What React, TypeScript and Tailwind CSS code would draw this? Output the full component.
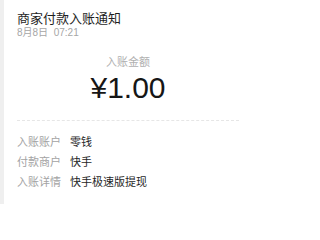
export default function App() {
  const rows = [
    ["入账账户", "零钱"],
    ["付款商户", "快手"],
    ["入账详情", "快手极速版提现"],
  ];
  return (
    <div
      className="flex w-[248px] h-[204px] bg-white overflow-hidden"
      style={{ fontFamily: '"Liberation Sans", "Noto Sans CJK SC", sans-serif' }}
    >
      <div className="w-[4px] shrink-0 bg-[#efefef]" />
      <div className="flex-1 flex flex-col pl-[13px] pr-[9px] pt-[11px]">
        <div className="text-[13px] leading-[16px] text-[#1f1f1f]">商家付款入账通知</div>
        <div className="text-[10px] leading-[12px] text-[#a6a6a6]">8月8日&nbsp;&nbsp;07:21</div>
        <div className="mt-[16px] text-center text-[11px] leading-[14px] text-[#b0b0b0]">入账金额</div>
        <div className="mt-[4px] text-center text-[30px] leading-[30px] text-[#161616]">¥1.00</div>
        <div className="mt-[17px] border-t border-dashed border-[#e6e6e6]" />
        <div className="mt-[11px] flex flex-col">
          {rows.map(([k, v]) => (
            <div key={k} className="flex gap-[9px] text-[11px] leading-[20px]">
              <span className="text-[#a3a3a3]">{k}</span>
              <span className="text-[#1f1f1f]">{v}</span>
            </div>
          ))}
        </div>
      </div>
    </div>
  );
}
